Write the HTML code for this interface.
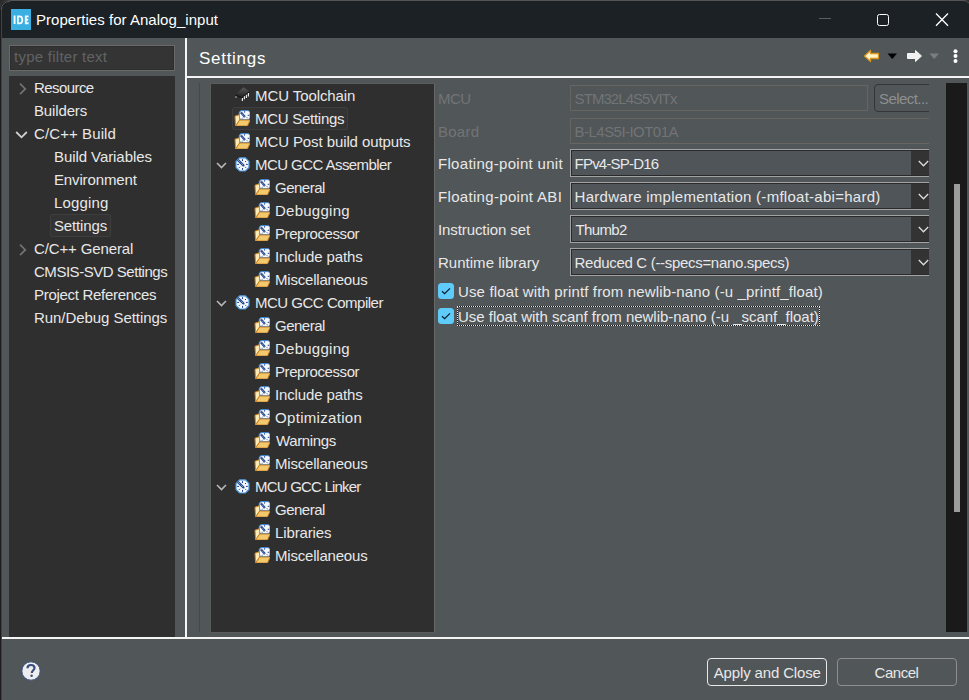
<!DOCTYPE html>
<html><head><meta charset="utf-8">
<style>
*{margin:0;padding:0;box-sizing:border-box}
html,body{width:969px;height:700px;overflow:hidden;background:#2b2b2b}
body{position:relative;font-family:"Liberation Sans",sans-serif;font-size:15px;color:#e8e8e8}
.a{position:absolute}
.t{position:absolute;white-space:pre;line-height:18px}
#win{position:absolute;left:0;top:0;width:969px;height:700px;background:#515658;border-top-left-radius:8px;overflow:hidden}
#title{position:absolute;left:0;top:0;width:969px;height:38px;background:#1b2124;border-top:1px solid #555;border-top-left-radius:8px}
.tree{position:absolute;background:#2f2f2f}
.dis{color:#717476}
.fld{position:absolute;border:1px solid #676562}
.cmb{position:absolute;height:28px;border:1px solid #a3a3a3;border-right:none;background:#2a2a2a;padding:1px 0 1px 1px}
.cmb .in{position:absolute;left:1px;top:1px;right:18px;bottom:1px;background:#50555a}
.cmb .dd{position:absolute;right:0;top:1px;width:18px;bottom:1px;background:#333}
.cb{position:absolute;width:16px;height:16px;border-radius:3.5px;background:#5ecbfb}
</style></head><body>
<svg width="0" height="0" style="position:absolute">
<defs>
<linearGradient id="gchip" x1="0" y1="0" x2="0" y2="1"><stop offset="0" stop-color="#5a5a5a"/><stop offset="1" stop-color="#1e1e1e"/></linearGradient>
<symbol id="ichip" viewBox="0 0 16 16">
<path d="M9.4 0.3L15.3 4.3L7.6 10.4L1.6 7.2Z" fill="url(#gchip)"/>
<path d="M1.6 7.2L7.6 10.4L7.6 11.6L1.6 8.4Z" fill="#121212"/>
<path d="M7.6 10.4L15.3 4.3L15.3 5.5L7.6 11.6Z" fill="#0e0e0e"/>
<path d="M8.4 10.9V14M10.4 9.3V12.3M12.4 7.7V10.9M14.4 6V9.4" stroke="#e6e6e6" stroke-width="1.2"/>
<path d="M2 8.9V10.9" stroke="#8a8a8a" stroke-width="1.4"/>
</symbol>
<symbol id="ifold" viewBox="0 0 16 16">
<path d="M7 0.6H14.3L16 2.3V8L14.3 9.7H7L5.2 8V2.3Z" fill="#f6f9fd" stroke="#3a86d4" stroke-width="1"/>
<path d="M6.8 2.2L11 7" stroke="#1f4596" stroke-width="2.1"/>
<path d="M7.2 2.6L10.6 6.6" stroke="#e8e294" stroke-width="0.8" stroke-dasharray="0.9 1.1"/>
<path d="M10.6 1.2V2.6M15.2 5.3H13.7M13.8 8.3L12.9 7.4M8 8.6L8.9 7.7" stroke="#1d3f8a" stroke-width="1"/>
<path d="M1 6.2L5.4 4.8L5.7 10L1.6 16Z" fill="#fdeab4" stroke="#cf8a2a" stroke-width="1"/>
<path d="M1.6 16L13.4 16L16.2 10L5.7 10Z" fill="#f3c96e" stroke="#c98024" stroke-width="1" stroke-linejoin="round"/>
</symbol>
<symbol id="igear" viewBox="0 0 16 16">
<path d="M5.6 1.8H11.4L15 5.4V11.4L11.4 15H5.6L2 11.4V5.4Z" fill="#f2f6fb" stroke="#4a94da" stroke-width="1.2"/>
<path d="M3.8 3.8L10 10" stroke="#1f4596" stroke-width="2.4"/>
<path d="M4 4L9.6 9.6" stroke="#e4dc90" stroke-width="0.9" stroke-dasharray="0.9 1.1"/>
<path d="M8.5 3.2V5M8.5 12V13.8M3.2 8.4H5M12 8.4H13.8M5 11.8L6 10.8M12 5L11 6M12 11.8L11 10.8" stroke="#1d3f8a" stroke-width="1"/>
</symbol>
</defs></svg>
<div id="win">
  <div id="title">
    <div class="a" style="left:11px;top:8px;width:20px;height:20px;background:#3ab0e2"></div>
    <svg class="a" style="left:11px;top:8px" width="20" height="21" viewBox="0 0 20 21"><rect x="0" y="1" width="20" height="20" fill="#3ab0e2"/><g fill="none" stroke="#f2f8fc" stroke-width="1.9"><path d="M3.6 6.6V15"/><path d="M6.9 7.4V14.4H8.6C10.4 14.4 11.3 13.2 11.3 10.9C11.3 8.6 10.4 7.4 8.6 7.4Z" stroke-width="1.8"/><path d="M17.6 7.4H14.8V14.3H17.6M14.8 10.8H17.2"/></g></svg>
    <div class="a" style="left:819px;top:17px;width:12px;height:1px;background:#5a5e60"></div>
    <div class="a" style="left:877px;top:13px;width:12px;height:12px;border:1.4px solid #fff;border-radius:2.5px"></div>
    <svg class="a" style="left:935px;top:12px" width="14" height="14" viewBox="0 0 14 14"><path d="M1 0.5L13 12.8M13 0.5L1 12.8" stroke="#fff" stroke-width="1.3"/></svg>
  </div>
  <!-- left column -->
  <div class="a" style="left:9px;top:45px;width:166px;height:26px;background:#343434;border:1px solid #6a6a6a;box-shadow:inset 0 0 0 1px #2d2d2d"></div>
  <div class="tree" style="left:9px;top:76px;width:166px;height:561px"></div>
  <div class="a" style="left:50px;top:214px;width:61px;height:23px;background:#333;border:1px solid #3e3e3e;border-radius:2px"></div>
  <!-- sash -->
  <div class="a" style="left:185px;top:38px;width:2px;height:601px;background:#f4f4f4"></div>
  <div class="a" style="left:187px;top:76px;width:782px;height:2px;background:#f4f4f4"></div>
  <div class="a" style="left:2px;top:637px;width:967px;height:2px;background:#f4f4f4"></div>
  <!-- nav -->
  <svg class="a" style="left:863px;top:49px" width="17" height="14" viewBox="0 0 17 14"><path d="M1.5 7L7.5 1.5V4.5H15.5V9.5H7.5V12.5Z" fill="#fff4c4" stroke="#d49521" stroke-width="1.3" stroke-linejoin="round"/></svg>
  <svg class="a" style="left:887px;top:53px" width="11" height="7" viewBox="0 0 11 7"><path d="M0.5 0.5H10L5.25 6Z" fill="#000"/></svg>
  <svg class="a" style="left:906px;top:49px" width="17" height="14" viewBox="0 0 17 14"><path d="M15.5 7L9.5 1.5V4.5H1.5V9.5H9.5V12.5Z" fill="#f2f2f2" stroke="#f2f2f2" stroke-width="1" stroke-linejoin="round"/></svg>
  <svg class="a" style="left:929px;top:53px" width="11" height="7" viewBox="0 0 11 7"><path d="M0.5 0.5H10L5.25 6Z" fill="#7a7e80"/></svg>
  <svg class="a" style="left:952px;top:48px" width="7" height="16" viewBox="0 0 7 16"><circle cx="3.5" cy="3.3" r="2" fill="#fff"/><circle cx="3.5" cy="8" r="2" fill="#fff"/><circle cx="3.5" cy="13" r="2" fill="#fff"/></svg>
  <!-- inner -->
  <div class="a" style="left:199px;top:83px;width:1px;height:549px;background:#46494c"></div>
  <div class="tree" style="left:210px;top:83px;width:225px;height:550px;border:1px solid #5b5b5b;border-right-color:#686868"></div>
  <div class="a" style="left:232px;top:107px;width:116px;height:23px;background:#333;border:1px solid #3e3e3e;border-radius:2px"></div>
  <!-- right content -->
  <div class="fld" style="left:570px;top:85px;width:298px;height:26px"></div>
  <div class="a" style="left:874px;top:84px;width:70px;height:28px;border:1px solid #353535;border-radius:4px"></div>
  <div class="fld" style="left:570px;top:118px;width:375px;height:26px"></div>

  <div class="cmb" style="left:570px;top:149px;width:359px"><div class="in"></div><div class="dd"></div></div>
  <div class="cmb" style="left:570px;top:182px;width:359px"><div class="in"></div><div class="dd"></div></div>
  <div class="cmb" style="left:570px;top:215px;width:359px"><div class="in"></div><div class="dd"></div></div>
  <div class="cmb" style="left:570px;top:248px;width:359px"><div class="in"></div><div class="dd"></div></div>
  <svg class="a" style="left:917px;top:157px" width="12" height="110" viewBox="0 0 12 110"><path d="M1.8 4L6.5 8.8L11.2 4M1.8 37L6.5 41.8L11.2 37M1.8 70L6.5 74.8L11.2 70M1.8 103L6.5 107.8L11.2 103" fill="none" stroke="#dcdcdc" stroke-width="1.3"/></svg>
  <div class="a" style="left:929px;top:84px;width:17px;height:200px;background:#515658"></div>

  <div class="cb" style="left:438px;top:283px"></div>
  <svg class="a" style="left:438px;top:283px" width="16" height="16" viewBox="0 0 16 16"><path d="M4 8.3L6.6 10.6L12 5.3" fill="none" stroke="#0a1520" stroke-width="1.15"/></svg>
  <div class="cb" style="left:438px;top:308px"></div>
  <svg class="a" style="left:438px;top:308px" width="16" height="16" viewBox="0 0 16 16"><path d="M4 8.3L6.6 10.6L12 5.3" fill="none" stroke="#0a1520" stroke-width="1.15"/></svg>
  <div class="a" style="left:457px;top:306px;width:363px;height:20px;border:1px solid #151515"></div><div class="a" style="left:457px;top:306px;width:363px;height:20px;border:1px dotted #e8e8e8"></div>

  <!-- scrollbar -->
  <div class="a" style="left:946px;top:83px;width:21px;height:549px;background:#1a1a1a"></div>
  <div class="a" style="left:954px;top:184px;width:6px;height:328px;background:#9c9c9c"></div>
  <!-- bottom -->
  <svg class="a" style="left:21px;top:661px" width="20" height="20" viewBox="0 0 20 20"><circle cx="10" cy="10" r="9.2" fill="#eeeeee" stroke="#3b5486" stroke-width="1"/><path d="M6.5 7.2C6.5 4.8 8.2 4 10 4C12 4 13.5 5.2 13.5 7C13.5 9.2 10.8 9.4 10.8 12" fill="none" stroke="#3b4f7c" stroke-width="2.2"/><circle cx="10.6" cy="14.8" r="1.3" fill="#3b4f7c"/></svg>
  <div class="a" style="left:707px;top:658px;width:120px;height:28px;border:1px solid #e8e8e8;border-radius:4px"></div>
  <div class="a" style="left:837px;top:658px;width:120px;height:28px;border:1px solid #8e8e8e;border-radius:4px"></div>

  <!-- window frame -->
  <div class="a" style="left:0;top:8px;width:1px;height:692px;background:#1c1c1c"></div>
  <div class="a" style="left:1px;top:8px;width:1px;height:692px;background:#404345"></div>
  <svg class="a" style="left:0;top:0" width="10" height="10" viewBox="0 0 10 10"><path d="M0 0H10V0.5H9A8.5 8.5 0 0 0 0.5 9V10H0Z" fill="#2e2e2e"/><path d="M1.5 10V9A7.5 7.5 0 0 1 9 1.5H10" fill="none" stroke="#555" stroke-width="1"/></svg>
  <svg class="a" style="left:959px;top:0" width="10" height="10" viewBox="0 0 10 10"><path d="M4 0H10V2.7A8 8 0 0 0 4 0Z" fill="#2e2e2e"/><path d="M0 0.5H4A7.5 7.5 0 0 1 10 3.2" fill="none" stroke="#555" stroke-width="1"/></svg>
<!-- left tree -->
<svg class="a" style="left:18px;top:82px" width="10" height="13" viewBox="0 0 10 13"><path d="M2 1.6L7.3 6.9L2 12.2" fill="none" stroke="#707070" stroke-width="1.8"/></svg>
<svg class="a" style="left:15px;top:130px" width="13" height="9" viewBox="0 0 13 9"><path d="M1.2 2L6.5 7.3L11.8 2" fill="none" stroke="#d0d0d0" stroke-width="1.8"/></svg>
<svg class="a" style="left:18px;top:243px" width="10" height="13" viewBox="0 0 10 13"><path d="M2 1.6L7.3 6.9L2 12.2" fill="none" stroke="#707070" stroke-width="1.8"/></svg>
<!-- mid tree -->
<svg class="a" style="left:234px;top:87px" width="16" height="16"><use href="#ichip"/></svg>
<svg class="a" style="left:234px;top:110px" width="16" height="16"><use href="#ifold"/></svg>
<svg class="a" style="left:234px;top:133px" width="16" height="16"><use href="#ifold"/></svg>
<svg class="a" style="left:216px;top:162px" width="11" height="7" viewBox="0 0 11 7"><path d="M1 1L5.5 5.5L10 1" fill="none" stroke="#b8b8b8" stroke-width="1.6"/></svg>
<svg class="a" style="left:234px;top:156px" width="16" height="16"><use href="#igear"/></svg>
<svg class="a" style="left:254px;top:179px" width="16" height="16"><use href="#ifold"/></svg>
<svg class="a" style="left:254px;top:202px" width="16" height="16"><use href="#ifold"/></svg>
<svg class="a" style="left:254px;top:225px" width="16" height="16"><use href="#ifold"/></svg>
<svg class="a" style="left:254px;top:248px" width="16" height="16"><use href="#ifold"/></svg>
<svg class="a" style="left:254px;top:271px" width="16" height="16"><use href="#ifold"/></svg>
<svg class="a" style="left:216px;top:300px" width="11" height="7" viewBox="0 0 11 7"><path d="M1 1L5.5 5.5L10 1" fill="none" stroke="#b8b8b8" stroke-width="1.6"/></svg>
<svg class="a" style="left:234px;top:294px" width="16" height="16"><use href="#igear"/></svg>
<svg class="a" style="left:254px;top:317px" width="16" height="16"><use href="#ifold"/></svg>
<svg class="a" style="left:254px;top:340px" width="16" height="16"><use href="#ifold"/></svg>
<svg class="a" style="left:254px;top:363px" width="16" height="16"><use href="#ifold"/></svg>
<svg class="a" style="left:254px;top:386px" width="16" height="16"><use href="#ifold"/></svg>
<svg class="a" style="left:254px;top:409px" width="16" height="16"><use href="#ifold"/></svg>
<svg class="a" style="left:254px;top:432px" width="16" height="16"><use href="#ifold"/></svg>
<svg class="a" style="left:254px;top:455px" width="16" height="16"><use href="#ifold"/></svg>
<svg class="a" style="left:216px;top:484px" width="11" height="7" viewBox="0 0 11 7"><path d="M1 1L5.5 5.5L10 1" fill="none" stroke="#b8b8b8" stroke-width="1.6"/></svg>
<svg class="a" style="left:234px;top:478px" width="16" height="16"><use href="#igear"/></svg>
<svg class="a" style="left:254px;top:501px" width="16" height="16"><use href="#ifold"/></svg>
<svg class="a" style="left:254px;top:524px" width="16" height="16"><use href="#ifold"/></svg>
<svg class="a" style="left:254px;top:547px" width="16" height="16"><use href="#ifold"/></svg>
<div class="t" style="left:36.0px;top:11px;font-size:15px;line-height:18px;color:#ffffff;letter-spacing:0.038px">Properties for Analog_input</div>
<div class="t" style="left:14.0px;top:48px;font-size:15px;line-height:18px;color:#606366;letter-spacing:0.253px">type filter text</div>
<div class="t" style="left:199.0px;top:49px;font-size:17px;line-height:20px;color:#ffffff;letter-spacing:0.714px">Settings</div>
<div class="t" style="left:34.0px;top:79px;font-size:15px;line-height:18px;color:#e8e8e8;letter-spacing:-0.571px">Resource</div>
<div class="t" style="left:34.0px;top:102px;font-size:15px;line-height:18px;color:#e8e8e8;letter-spacing:-0.143px">Builders</div>
<div class="t" style="left:34.0px;top:125px;font-size:15px;line-height:18px;color:#e8e8e8;letter-spacing:0.100px">C/C++ Build</div>
<div class="t" style="left:54.0px;top:148px;font-size:15px;line-height:18px;color:#e8e8e8;letter-spacing:-0.071px">Build Variables</div>
<div class="t" style="left:54.0px;top:171px;font-size:15px;line-height:18px;color:#e8e8e8;letter-spacing:-0.140px">Environment</div>
<div class="t" style="left:54.0px;top:194px;font-size:15px;line-height:18px;color:#e8e8e8;letter-spacing:0.167px">Logging</div>
<div class="t" style="left:54.0px;top:217px;font-size:15px;line-height:18px;color:#e8e8e8;letter-spacing:-0.143px">Settings</div>
<div class="t" style="left:34.0px;top:240px;font-size:15px;line-height:18px;color:#e8e8e8;letter-spacing:-0.125px">C/C++ General</div>
<div class="t" style="left:34.0px;top:263px;font-size:15px;line-height:18px;color:#e8e8e8;letter-spacing:-0.471px">CMSIS-SVD Settings</div>
<div class="t" style="left:34.0px;top:286px;font-size:15px;line-height:18px;color:#e8e8e8;letter-spacing:-0.294px">Project References</div>
<div class="t" style="left:34.0px;top:309px;font-size:15px;line-height:18px;color:#e8e8e8;letter-spacing:-0.059px">Run/Debug Settings</div>
<div class="t" style="left:255.0px;top:87px;font-size:15px;line-height:18px;color:#e8e8e8;letter-spacing:-0.083px">MCU Toolchain</div>
<div class="t" style="left:255.0px;top:110px;font-size:15px;line-height:18px;color:#e8e8e8;letter-spacing:-0.273px">MCU Settings</div>
<div class="t" style="left:255.0px;top:133px;font-size:15px;line-height:18px;color:#e8e8e8;letter-spacing:-0.095px">MCU Post build outputs</div>
<div class="t" style="left:255.0px;top:156px;font-size:15px;line-height:18px;color:#e8e8e8;letter-spacing:-0.562px">MCU GCC Assembler</div>
<div class="t" style="left:275.0px;top:179px;font-size:15px;line-height:18px;color:#e8e8e8;letter-spacing:-0.500px">General</div>
<div class="t" style="left:275.0px;top:202px;font-size:15px;line-height:18px;color:#e8e8e8;letter-spacing:0.250px">Debugging</div>
<div class="t" style="left:275.0px;top:225px;font-size:15px;line-height:18px;color:#e8e8e8;letter-spacing:-0.418px">Preprocessor</div>
<div class="t" style="left:275.0px;top:248px;font-size:15px;line-height:18px;color:#e8e8e8;letter-spacing:-0.133px">Include paths</div>
<div class="t" style="left:275.0px;top:271px;font-size:15px;line-height:18px;color:#e8e8e8;letter-spacing:-0.200px">Miscellaneous</div>
<div class="t" style="left:255.0px;top:294px;font-size:15px;line-height:18px;color:#e8e8e8;letter-spacing:-0.493px">MCU GCC Compiler</div>
<div class="t" style="left:275.0px;top:317px;font-size:15px;line-height:18px;color:#e8e8e8;letter-spacing:-0.500px">General</div>
<div class="t" style="left:275.0px;top:340px;font-size:15px;line-height:18px;color:#e8e8e8;letter-spacing:0.250px">Debugging</div>
<div class="t" style="left:275.0px;top:363px;font-size:15px;line-height:18px;color:#e8e8e8;letter-spacing:-0.418px">Preprocessor</div>
<div class="t" style="left:275.0px;top:386px;font-size:15px;line-height:18px;color:#e8e8e8;letter-spacing:-0.133px">Include paths</div>
<div class="t" style="left:275.0px;top:409px;font-size:15px;line-height:18px;color:#e8e8e8;letter-spacing:0.318px">Optimization</div>
<div class="t" style="left:276.0px;top:432px;font-size:15px;line-height:18px;color:#e8e8e8;letter-spacing:-0.371px">Warnings</div>
<div class="t" style="left:275.0px;top:455px;font-size:15px;line-height:18px;color:#e8e8e8;letter-spacing:-0.200px">Miscellaneous</div>
<div class="t" style="left:255.0px;top:478px;font-size:15px;line-height:18px;color:#e8e8e8;letter-spacing:-0.800px">MCU GCC Linker</div>
<div class="t" style="left:275.0px;top:501px;font-size:15px;line-height:18px;color:#e8e8e8;letter-spacing:-0.500px">General</div>
<div class="t" style="left:275.0px;top:524px;font-size:15px;line-height:18px;color:#e8e8e8;letter-spacing:-0.125px">Libraries</div>
<div class="t" style="left:275.0px;top:547px;font-size:15px;line-height:18px;color:#e8e8e8;letter-spacing:-0.200px">Miscellaneous</div>
<div class="t" style="left:438.0px;top:90px;font-size:15px;line-height:18px;color:#717476;letter-spacing:-0.500px">MCU</div>
<div class="t" style="left:438.0px;top:123px;font-size:15px;line-height:18px;color:#717476;letter-spacing:0.250px">Board</div>
<div class="t" style="left:438.0px;top:155px;font-size:15px;line-height:18px;color:#e8e8e8;letter-spacing:0.300px">Floating-point unit</div>
<div class="t" style="left:438.0px;top:188px;font-size:15px;line-height:18px;color:#e8e8e8;letter-spacing:0.318px">Floating-point ABI</div>
<div class="t" style="left:438.0px;top:221px;font-size:15px;line-height:18px;color:#e8e8e8;letter-spacing:-0.093px">Instruction set</div>
<div class="t" style="left:438.0px;top:254px;font-size:15px;line-height:18px;color:#e8e8e8;letter-spacing:0.021px">Runtime library</div>
<div class="t" style="left:574.6px;top:90px;font-size:15px;line-height:18px;color:#717476;letter-spacing:-0.942px">STM32L4S5VITx</div>
<div class="t" style="left:574.6px;top:123px;font-size:15px;line-height:18px;color:#717476;letter-spacing:-0.538px">B-L4S5I-IOT01A</div>
<div class="t" style="left:879.0px;top:90px;font-size:15px;line-height:18px;color:#8d8f91;letter-spacing:-0.562px">Select...</div>
<div class="t" style="left:574.6px;top:155px;font-size:15px;line-height:18px;color:#e8e8e8;letter-spacing:-0.800px">FPv4-SP-D16</div>
<div class="t" style="left:574.6px;top:188px;font-size:15px;line-height:18px;color:#e8e8e8;letter-spacing:0.268px">Hardware implementation (-mfloat-abi=hard)</div>
<div class="t" style="left:575.6px;top:221px;font-size:15px;line-height:18px;color:#e8e8e8;letter-spacing:-0.660px">Thumb2</div>
<div class="t" style="left:574.6px;top:254px;font-size:15px;line-height:18px;color:#e8e8e8;letter-spacing:-0.310px">Reduced C (--specs=nano.specs)</div>
<div class="t" style="left:458.0px;top:283px;font-size:15px;line-height:18px;color:#e8e8e8;letter-spacing:0.143px">Use float with printf from newlib-nano (-u _printf_float)</div>
<div class="t" style="left:458.0px;top:308px;font-size:15px;line-height:18px;color:#e8e8e8;letter-spacing:-0.019px">Use float with scanf from newlib-nano (-u _scanf_float)</div>
<div class="t" style="left:713.7px;top:664px;font-size:15px;line-height:18px;color:#e8e8e8;letter-spacing:-0.143px">Apply and Close</div>
<div class="t" style="left:874.6px;top:664px;font-size:15px;line-height:18px;color:#e8e8e8;letter-spacing:-0.480px">Cancel</div></div></body></html>
